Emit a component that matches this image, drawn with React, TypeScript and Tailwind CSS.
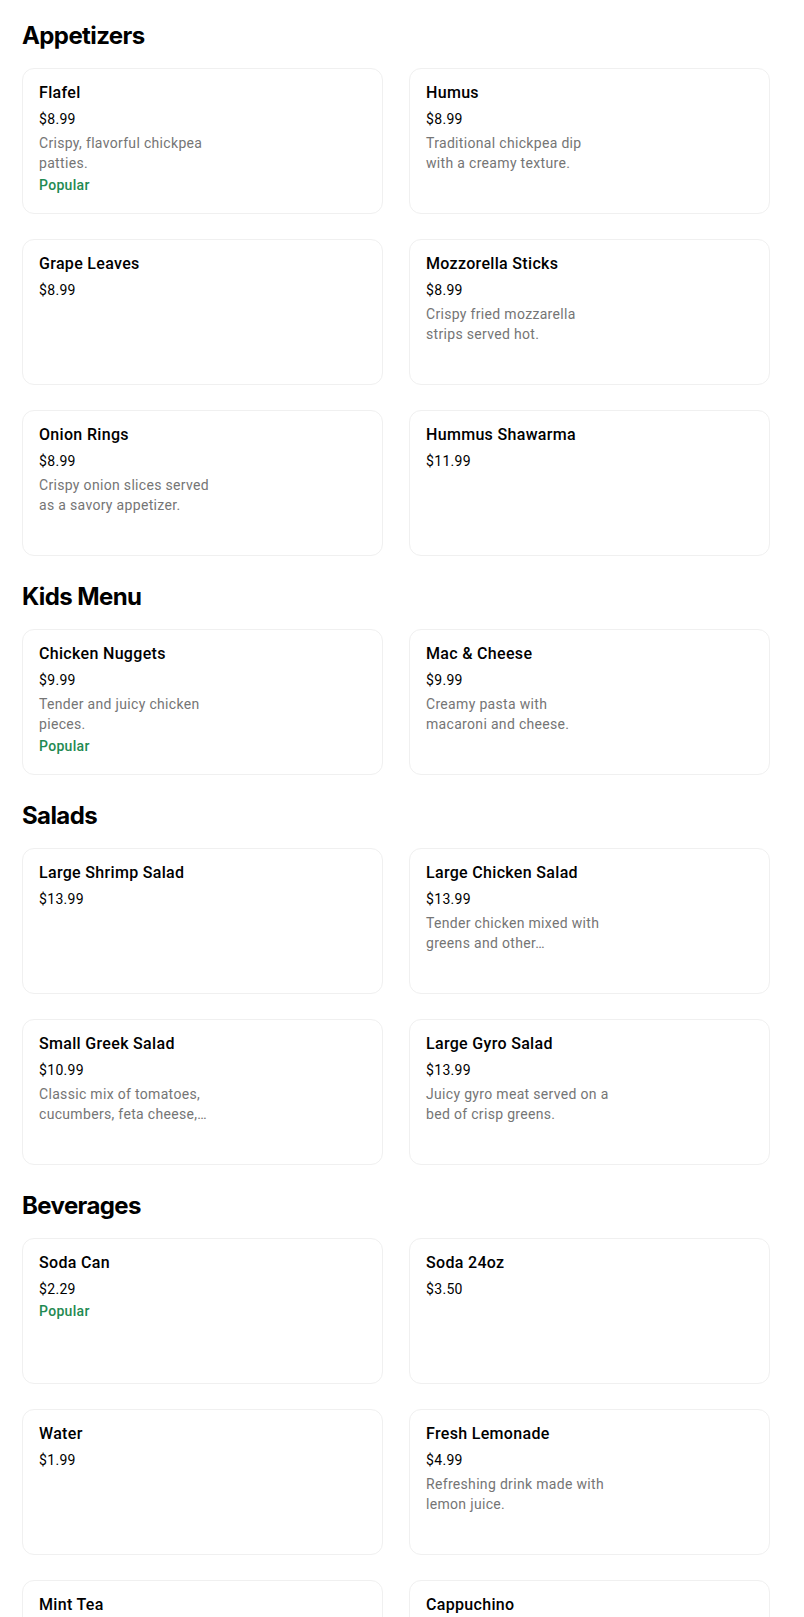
type Item = {
  name: string;
  price: string;
  desc?: string[];
  popular?: boolean;
};

type Section = {
  title: string;
  items: Item[];
};

const menu: Section[] = [
  {
    title: "Appetizers",
    items: [
      { name: "Flafel", price: "$8.99", desc: ["Crispy, flavorful chickpea", "patties."], popular: true },
      { name: "Humus", price: "$8.99", desc: ["Traditional chickpea dip", "with a creamy texture."] },
      { name: "Grape Leaves", price: "$8.99" },
      { name: "Mozzorella Sticks", price: "$8.99", desc: ["Crispy fried mozzarella", "strips served hot."] },
      { name: "Onion Rings", price: "$8.99", desc: ["Crispy onion slices served", "as a savory appetizer."] },
      { name: "Hummus Shawarma", price: "$11.99" },
    ],
  },
  {
    title: "Kids Menu",
    items: [
      { name: "Chicken Nuggets", price: "$9.99", desc: ["Tender and juicy chicken", "pieces."], popular: true },
      { name: "Mac & Cheese", price: "$9.99", desc: ["Creamy pasta with", "macaroni and cheese."] },
    ],
  },
  {
    title: "Salads",
    items: [
      { name: "Large Shrimp Salad", price: "$13.99" },
      { name: "Large Chicken Salad", price: "$13.99", desc: ["Tender chicken mixed with", "greens and other…"] },
      { name: "Small Greek Salad", price: "$10.99", desc: ["Classic mix of tomatoes,", "cucumbers, feta cheese,…"] },
      { name: "Large Gyro Salad", price: "$13.99", desc: ["Juicy gyro meat served on a", "bed of crisp greens."] },
    ],
  },
  {
    title: "Beverages",
    items: [
      { name: "Soda Can", price: "$2.29", popular: true },
      { name: "Soda 24oz", price: "$3.50" },
      { name: "Water", price: "$1.99" },
      { name: "Fresh Lemonade", price: "$4.99", desc: ["Refreshing drink made with", "lemon juice."] },
      { name: "Mint Tea", price: "$2.99" },
      { name: "Cappuchino", price: "$4.50" },
    ],
  },
];

const MenuCard = ({ item }: { item: Item }) => (
  <div className="h-[146px] rounded-xl border border-[#f0f0f0] bg-white px-4 pt-[12px] flex flex-col tracking-[0.02em]">
    <div className="text-[16px] leading-6 font-medium text-black">{item.name}</div>
    <div className="mt-1 text-[14px] leading-5 text-black">{item.price}</div>
    {item.desc && (
      <div className="mt-1 text-[14px] leading-5 text-[#757575]">
        {item.desc.map((line) => (
          <span key={line} className="block whitespace-nowrap">
            {line}
          </span>
        ))}
      </div>
    )}
    {item.popular && (
      <div className="mt-[2px] text-[14px] leading-5 font-medium text-[#1f8a52]">Popular</div>
    )}
  </div>
);

export default function App() {
  return (
    <div className="h-[1617px] overflow-hidden bg-white pl-[22px] pr-[34px] pt-5 font-['Roboto',sans-serif]">
      <div className="flex flex-col gap-[25px]">
        {menu.map((section) => (
          <section key={section.title}>
            {/* Section heading */}
            <h2 className="mb-4 text-2xl leading-8 font-bold tracking-tight text-black font-['Inter',sans-serif]">
              {section.title}
            </h2>
            <div className="grid grid-cols-2 gap-x-[26px] gap-y-[25px]">
              {section.items.map((item) => (
                <MenuCard key={item.name} item={item} />
              ))}
            </div>
          </section>
        ))}
      </div>
    </div>
  );
}
